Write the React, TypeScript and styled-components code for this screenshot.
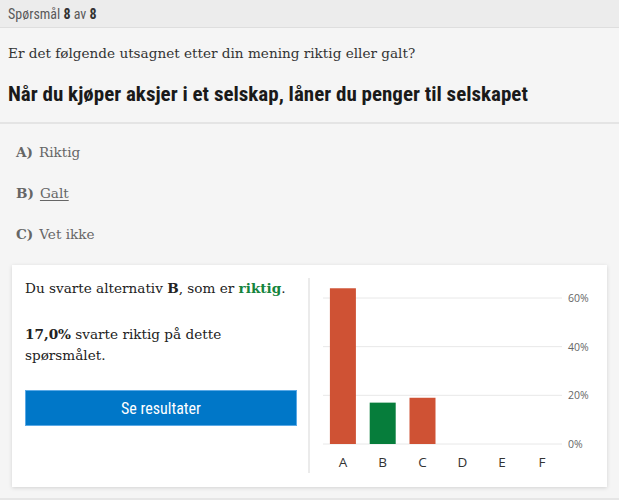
import styled, { createGlobalStyle } from "styled-components";

const GlobalStyle = createGlobalStyle`
  html, body {
    margin: 0;
    padding: 0;
    background: #f5f5f5;
  }
`;

const condensed = `"Liberation Sans Narrow", "Roboto Condensed", "DejaVu Sans Condensed", Roboto, sans-serif`;
const serif = `"DejaVu Serif", "Liberation Serif", serif`;

const Page = styled.div`
  width: 619px;
  height: 498px;
  background: #f5f5f5;
  border-bottom: 2px solid #e6e6e6;
  overflow: hidden;
`;

const TopBar = styled.div`
  height: 27px;
  display: flex;
  align-items: center;
  padding: 0 8px;
  background: #ececec;
  border-bottom: 1px solid #dedede;
  font-family: ${condensed};
  font-stretch: condensed;
  font-size: 14px;
  color: #5a5a5a;
  b {
    color: #333;
  }
`;

const QuestionBox = styled.div`
  padding: 14px 8px 13px;
  border-bottom: 2px solid #e4e4e4;
`;

const Lead = styled.p`
  margin: 0;
  font-family: ${serif};
  font-size: 13.6px;
  line-height: 22px;
  color: #333;
`;

const Title = styled.h1`
  margin: 15px 0 0;
  font-family: ${condensed};
  font-stretch: condensed;
  font-size: 21px;
  line-height: 30px;
  font-weight: 700;
  color: #1a1a1a;
  white-space: nowrap;
`;

const Options = styled.ul`
  list-style: none;
  margin: 0;
  padding: 14px 16px 0;
`;

const Option = styled.li<{ $chosen?: boolean }>`
  height: 41px;
  line-height: 28px;
  font-family: ${serif};
  font-size: 13.6px;
  color: #666;
  span {
    text-decoration: ${(p) => (p.$chosen ? "underline" : "none")};
    text-underline-offset: 2px;
  }
  b {
    margin-right: 6px;
    color: #666;
  }
`;

const Card = styled.div`
  margin: 4px 12px 0;
  height: 222px;
  box-sizing: border-box;
  background: #fff;
  box-shadow: 0 1px 4px rgba(0, 0, 0, 0.14);
  display: flex;
  padding: 13px 0 14px 13px;
`;

const Summary = styled.div`
  width: 283px;
  border-right: 2px solid #ebebeb;
  font-family: ${serif};
  font-size: 13.6px;
  line-height: 21px;
  color: #222;
  p {
    max-width: 266px;
    margin: 0 0 25px;
  }
  p:last-of-type {
    margin-bottom: 24px;
  }
`;

const Correct = styled.b`
  color: #15843d;
`;

const Button = styled.button`
  display: block;
  width: 272px;
  height: 36px;
  margin: 0;
  background: #0077c8;
  border: 1px solid #5aa9e6;
  color: #fff;
  font-family: ${condensed};
  font-stretch: condensed;
  font-size: 16px;
  cursor: pointer;
`;

const ChartBox = styled.div`
  flex: 1;
  padding-left: 12px;
`;

const data = [
  { label: "A", value: 64, correct: false },
  { label: "B", value: 17, correct: true },
  { label: "C", value: 19, correct: false },
  { label: "D", value: 0, correct: false },
  { label: "E", value: 0, correct: false },
  { label: "F", value: 0, correct: false },
];

const Chart = () => {
  const base = 166;
  const scale = 146 / 60;
  const col = 39.8;
  const left = 1;
  const ticks = [0, 20, 40, 60];
  return (
    <svg width="270" height="196" viewBox="0 0 270 196">
      {ticks.map((t) => {
        const y = base - t * scale;
        return (
          <g key={t}>
            <line x1={left} x2={240} y1={y} y2={y} stroke="#e8e8e8" strokeWidth="1" />
            <text
              x={246}
              y={y + 4}
              fontFamily="'Open Sans', sans-serif"
              fontSize="10.5"
              fill="#666"
            >
              {t}%
            </text>
          </g>
        );
      })}
      {data.map((d, i) => {
        const cx = left + col * i + col / 2;
        const h = d.value * scale;
        return (
          <g key={d.label}>
            {h > 0 && (
              <rect
                x={cx - 13}
                y={base - h}
                width="26"
                height={h}
                fill={d.correct ? "#067d3b" : "#cf5234"}
              />
            )}
            <text
              x={cx}
              y={189}
              textAnchor="middle"
              fontFamily="'Open Sans', sans-serif"
              fontSize="13.5"
              fill="#333"
            >
              {d.label}
            </text>
          </g>
        );
      })}
    </svg>
  );
};

export default function App() {
  return (
    <Page>
      <GlobalStyle />
      <TopBar>
        Spørsmål&nbsp;<b>8</b>&nbsp;av&nbsp;<b>8</b>
      </TopBar>
      <QuestionBox>
        <Lead>Er det følgende utsagnet etter din mening riktig eller galt?</Lead>
        <Title>Når du kjøper aksjer i et selskap, låner du penger til selskapet</Title>
      </QuestionBox>
      <Options>
        <Option>
          <b>A)</b>
          <span>Riktig</span>
        </Option>
        <Option $chosen>
          <b>B)</b>
          <span>Galt</span>
        </Option>
        <Option>
          <b>C)</b>
          <span>Vet ikke</span>
        </Option>
      </Options>
      <Card>
        <Summary>
          <p>
            Du svarte alternativ <b>B</b>, som er <Correct>riktig</Correct>.
          </p>
          <p>
            <b>17,0%</b> svarte riktig på dette spørsmålet.
          </p>
          <Button>Se resultater</Button>
        </Summary>
        <ChartBox>
          <Chart />
        </ChartBox>
      </Card>
    </Page>
  );
}
